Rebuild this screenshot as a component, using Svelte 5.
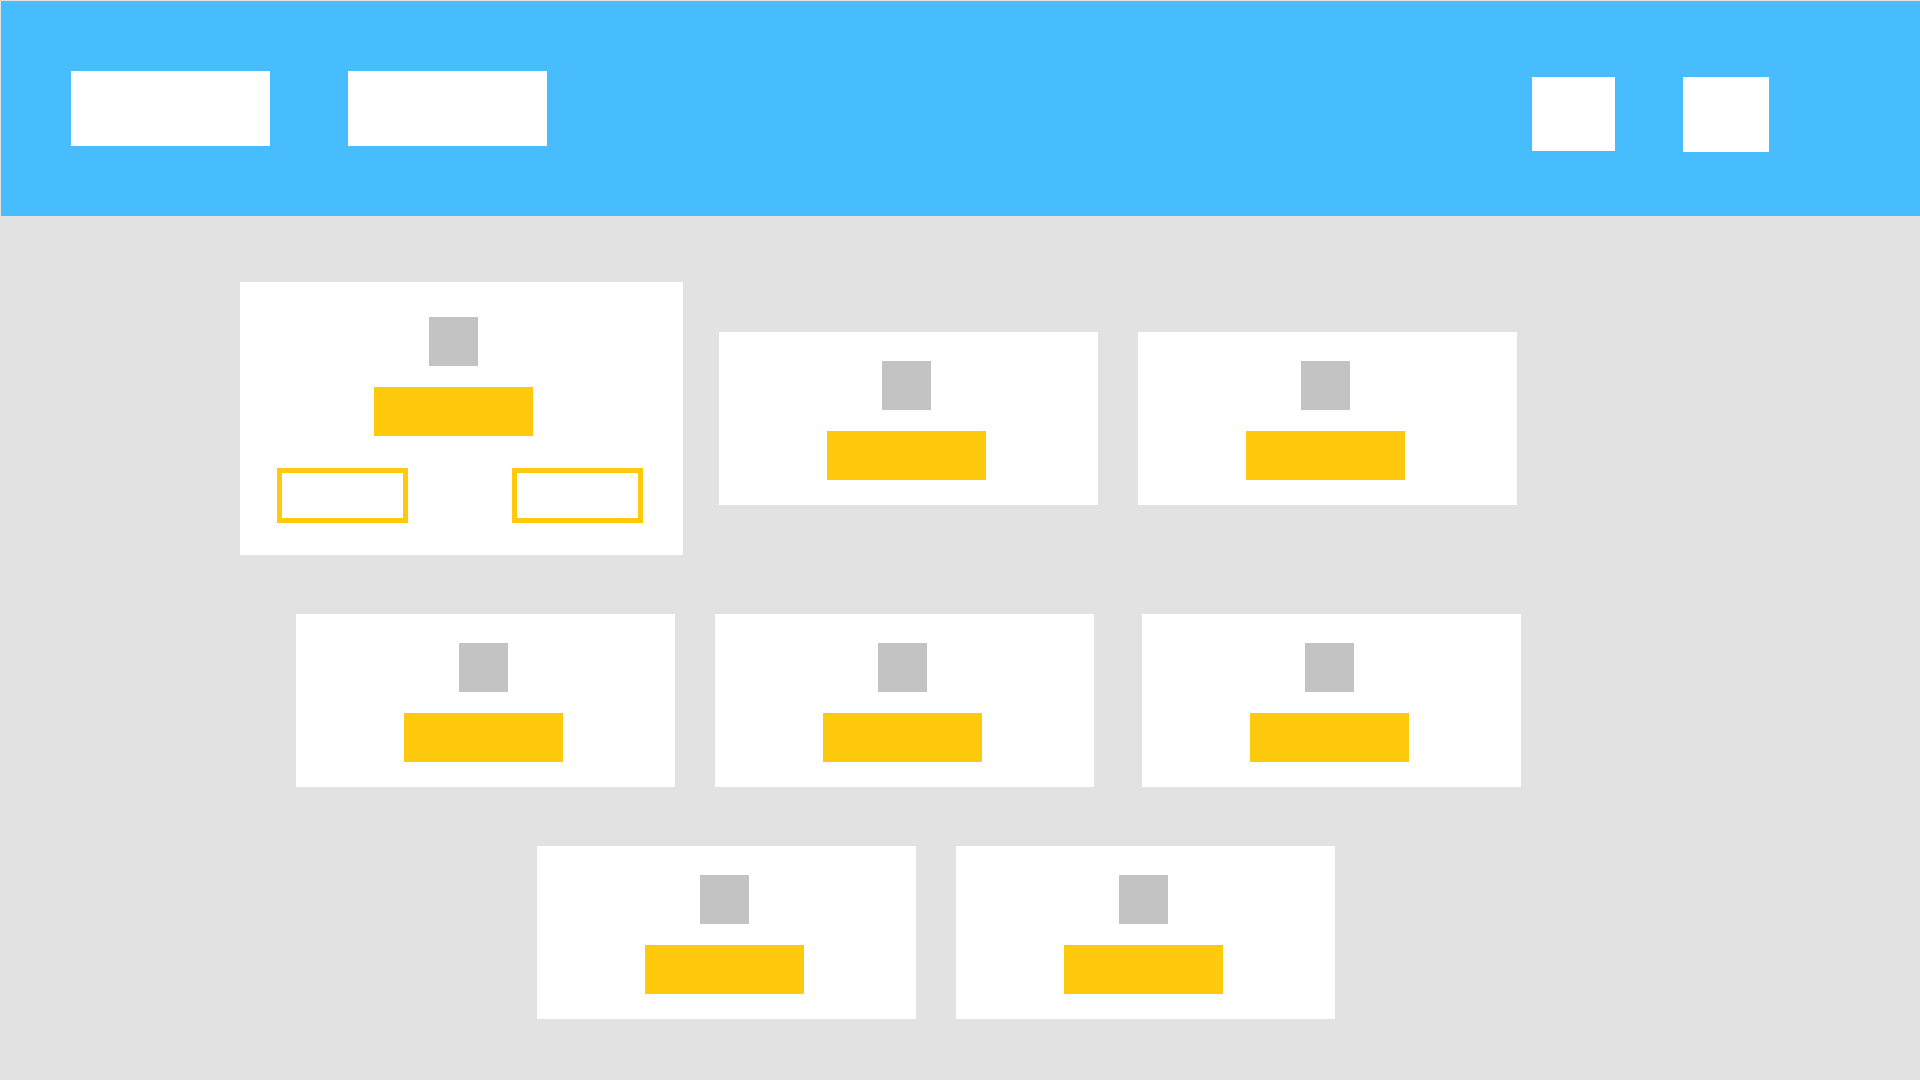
<script>
  // Each row is a list of groups; each group is a run of evenly spaced cards.
  const rows = [
    { name: 'first', groups: [['featured'], ['plain', 'plain']] },
    { name: 'second', groups: [['plain', 'plain'], ['plain']] },
    { name: 'third', groups: [['plain', 'plain']] }
  ];
</script>

<div class="page">
  <header>
    <nav class="links" aria-label="Main">
      <a href="#home" aria-label="Home"></a>
      <a href="#browse" aria-label="Browse"></a>
    </nav>
    <div class="tools">
      <button class="search" type="button" aria-label="Search"></button>
      <button class="account" type="button" aria-label="Account"></button>
    </div>
  </header>

  <main>
    {#each rows as row}
      <section class="row {row.name}">
        {#each row.groups as group}
          <div class="group">
            {#each group as kind}
              <article class="card {kind}">
                <div class="stack">
                  <div class="thumb"></div>
                  <button class="primary" type="button" aria-label="Open"></button>
                </div>
                {#if kind === 'featured'}
                  <div class="actions">
                    <button class="outline" type="button" aria-label="Previous"></button>
                    <button class="outline" type="button" aria-label="Next"></button>
                  </div>
                {/if}
              </article>
            {/each}
          </div>
        {/each}
      </section>
    {/each}
  </main>
</div>

<style>
  :global(body) {
    margin: 0;
    background: #e2e2e2;
    font-family: 'Liberation Sans', sans-serif;
  }

  .page,
  .page * {
    box-sizing: border-box;
  }

  button {
    margin: 0;
    padding: 0;
    border: 0;
    border-radius: 0;
    cursor: pointer;
  }

  .page {
    padding: 1px 0 0 1px;
  }

  header {
    display: flex;
    align-items: center;
    justify-content: space-between;
    gap: 40px;
    padding: 64px 151px 64px 70px;
    background: #48bdfe;
  }

  .links {
    display: flex;
    flex: 0 1 476px;
    gap: 78px;
  }

  .links a {
    flex: 1;
    height: 75px;
    background: #fff;
  }

  .tools {
    display: flex;
    align-items: flex-start;
    gap: 68px;
    padding-top: 12px;
  }

  .tools button {
    background: #fff;
  }

  .search {
    width: 83px;
    height: 74px;
  }

  .account {
    width: 86px;
    height: 75px;
  }

  main {
    display: flex;
    flex-direction: column;
    gap: 59px;
    padding: 66px 0 59px;
  }

  .row {
    display: flex;
    align-items: center;
  }

  .first {
    gap: 36px;
    padding-left: 239px;
  }

  .second {
    gap: 48px;
    padding-left: 295px;
  }

  .third {
    padding-left: 536px;
  }

  .group {
    display: flex;
    gap: 40px;
    min-width: 0;
  }

  .card {
    flex: 0 1 auto;
    width: 379px;
    padding: 29px 0 25px;
    background: #fff;
  }

  .featured {
    width: 443px;
    padding: 35px 0 32px;
  }

  .stack {
    display: flex;
    flex-direction: column;
    align-items: center;
    gap: 21px;
    padding-right: 4px;
  }

  .featured .stack {
    padding-right: 16px;
  }

  .thumb {
    width: 49px;
    height: 49px;
    background: #c3c3c3;
  }

  .primary {
    width: 159px;
    max-width: 100%;
    height: 49px;
    background: #ffc90e;
  }

  .actions {
    display: flex;
    justify-content: space-between;
    gap: 20px;
    margin-top: 32px;
    padding: 0 40px 0 37px;
  }

  .outline {
    width: 131px;
    height: 55px;
    border: 5px solid #ffc90e;
    background: #fff;
  }
</style>
